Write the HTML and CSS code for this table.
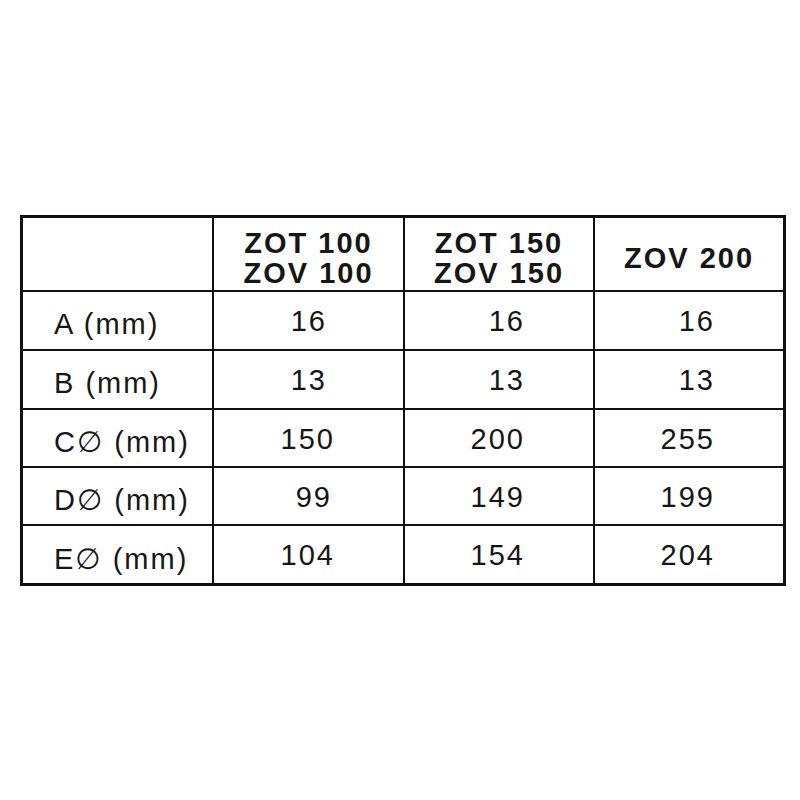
FILE: index.html
```html
<!DOCTYPE html>
<html lang="en">
<head>
    <meta charset="UTF-8">
    <meta name="viewport" content="width=device-width, initial-scale=1.0">
    <title>Dimensions</title>
    <link rel="stylesheet" href="styles.css">
</head>
<body>
    <table class="dims">
        <colgroup>
            <col class="col-label">
            <col class="col-a">
            <col class="col-b">
            <col class="col-c">
        </colgroup>
        <thead>
            <tr class="head-row">
                <th></th>
                <th>ZOT 100<br>ZOV 100</th>
                <th>ZOT 150<br>ZOV 150</th>
                <th>ZOV 200</th>
            </tr>
        </thead>
        <tbody>
            <tr class="r1">
                <td class="label">A (mm)</td>
                <td class="short">16</td>
                <td>16</td>
                <td>16</td>
            </tr>
            <tr class="r2">
                <td class="label">B (mm)</td>
                <td class="short">13</td>
                <td>13</td>
                <td>13</td>
            </tr>
            <tr class="r3">
                <td class="label">C∅ (mm)</td>
                <td>150</td>
                <td>200</td>
                <td>255</td>
            </tr>
            <tr class="r4">
                <td class="label">D∅ (mm)</td>
                <td class="mid">99</td>
                <td>149</td>
                <td>199</td>
            </tr>
            <tr class="r5">
                <td class="label">E∅ (mm)</td>
                <td>104</td>
                <td>154</td>
                <td>204</td>
            </tr>
        </tbody>
    </table>
</body>
</html>
```

FILE: styles.css
```css
body {
    margin: 0;
    background: #fff;
    font-family: "Liberation Sans", Arial, "DejaVu Sans", sans-serif;
    color: #161616;
}
.dims {
    margin: 215px 0 0 20px;
    width: 766px;
    table-layout: fixed;
    border-collapse: separate;
    border-spacing: 2px;
    border: 1px solid #111;
    background: #111;
}
.col-label,
.col-a {
    width: 189px;
}
.col-b,
.col-c {
    width: 188px;
}
.dims th,
.dims td {
    background: #fff;
    padding: 0;
    font-size: 29px;
    letter-spacing: 2px;
    vertical-align: middle;
}
.dims th {
    height: 65px;
    padding-top: 7px;
    font-weight: bold;
    line-height: 30px;
    text-align: center;
}
.dims td {
    text-align: right;
    padding-right: 68px;
    padding-top: 2px;
    height: 55px;
}
.dims td.label {
    text-align: left;
    padding: 8px 0 0 31px;
    height: 49px;
}
.dims td.short {
    padding-right: 76px;
}
.dims td.mid {
    padding-right: 71px;
}
.r3 td,
.r4 td {
    height: 54px;
}
.r3 td.label,
.r4 td.label {
    height: 48px;
}
```
